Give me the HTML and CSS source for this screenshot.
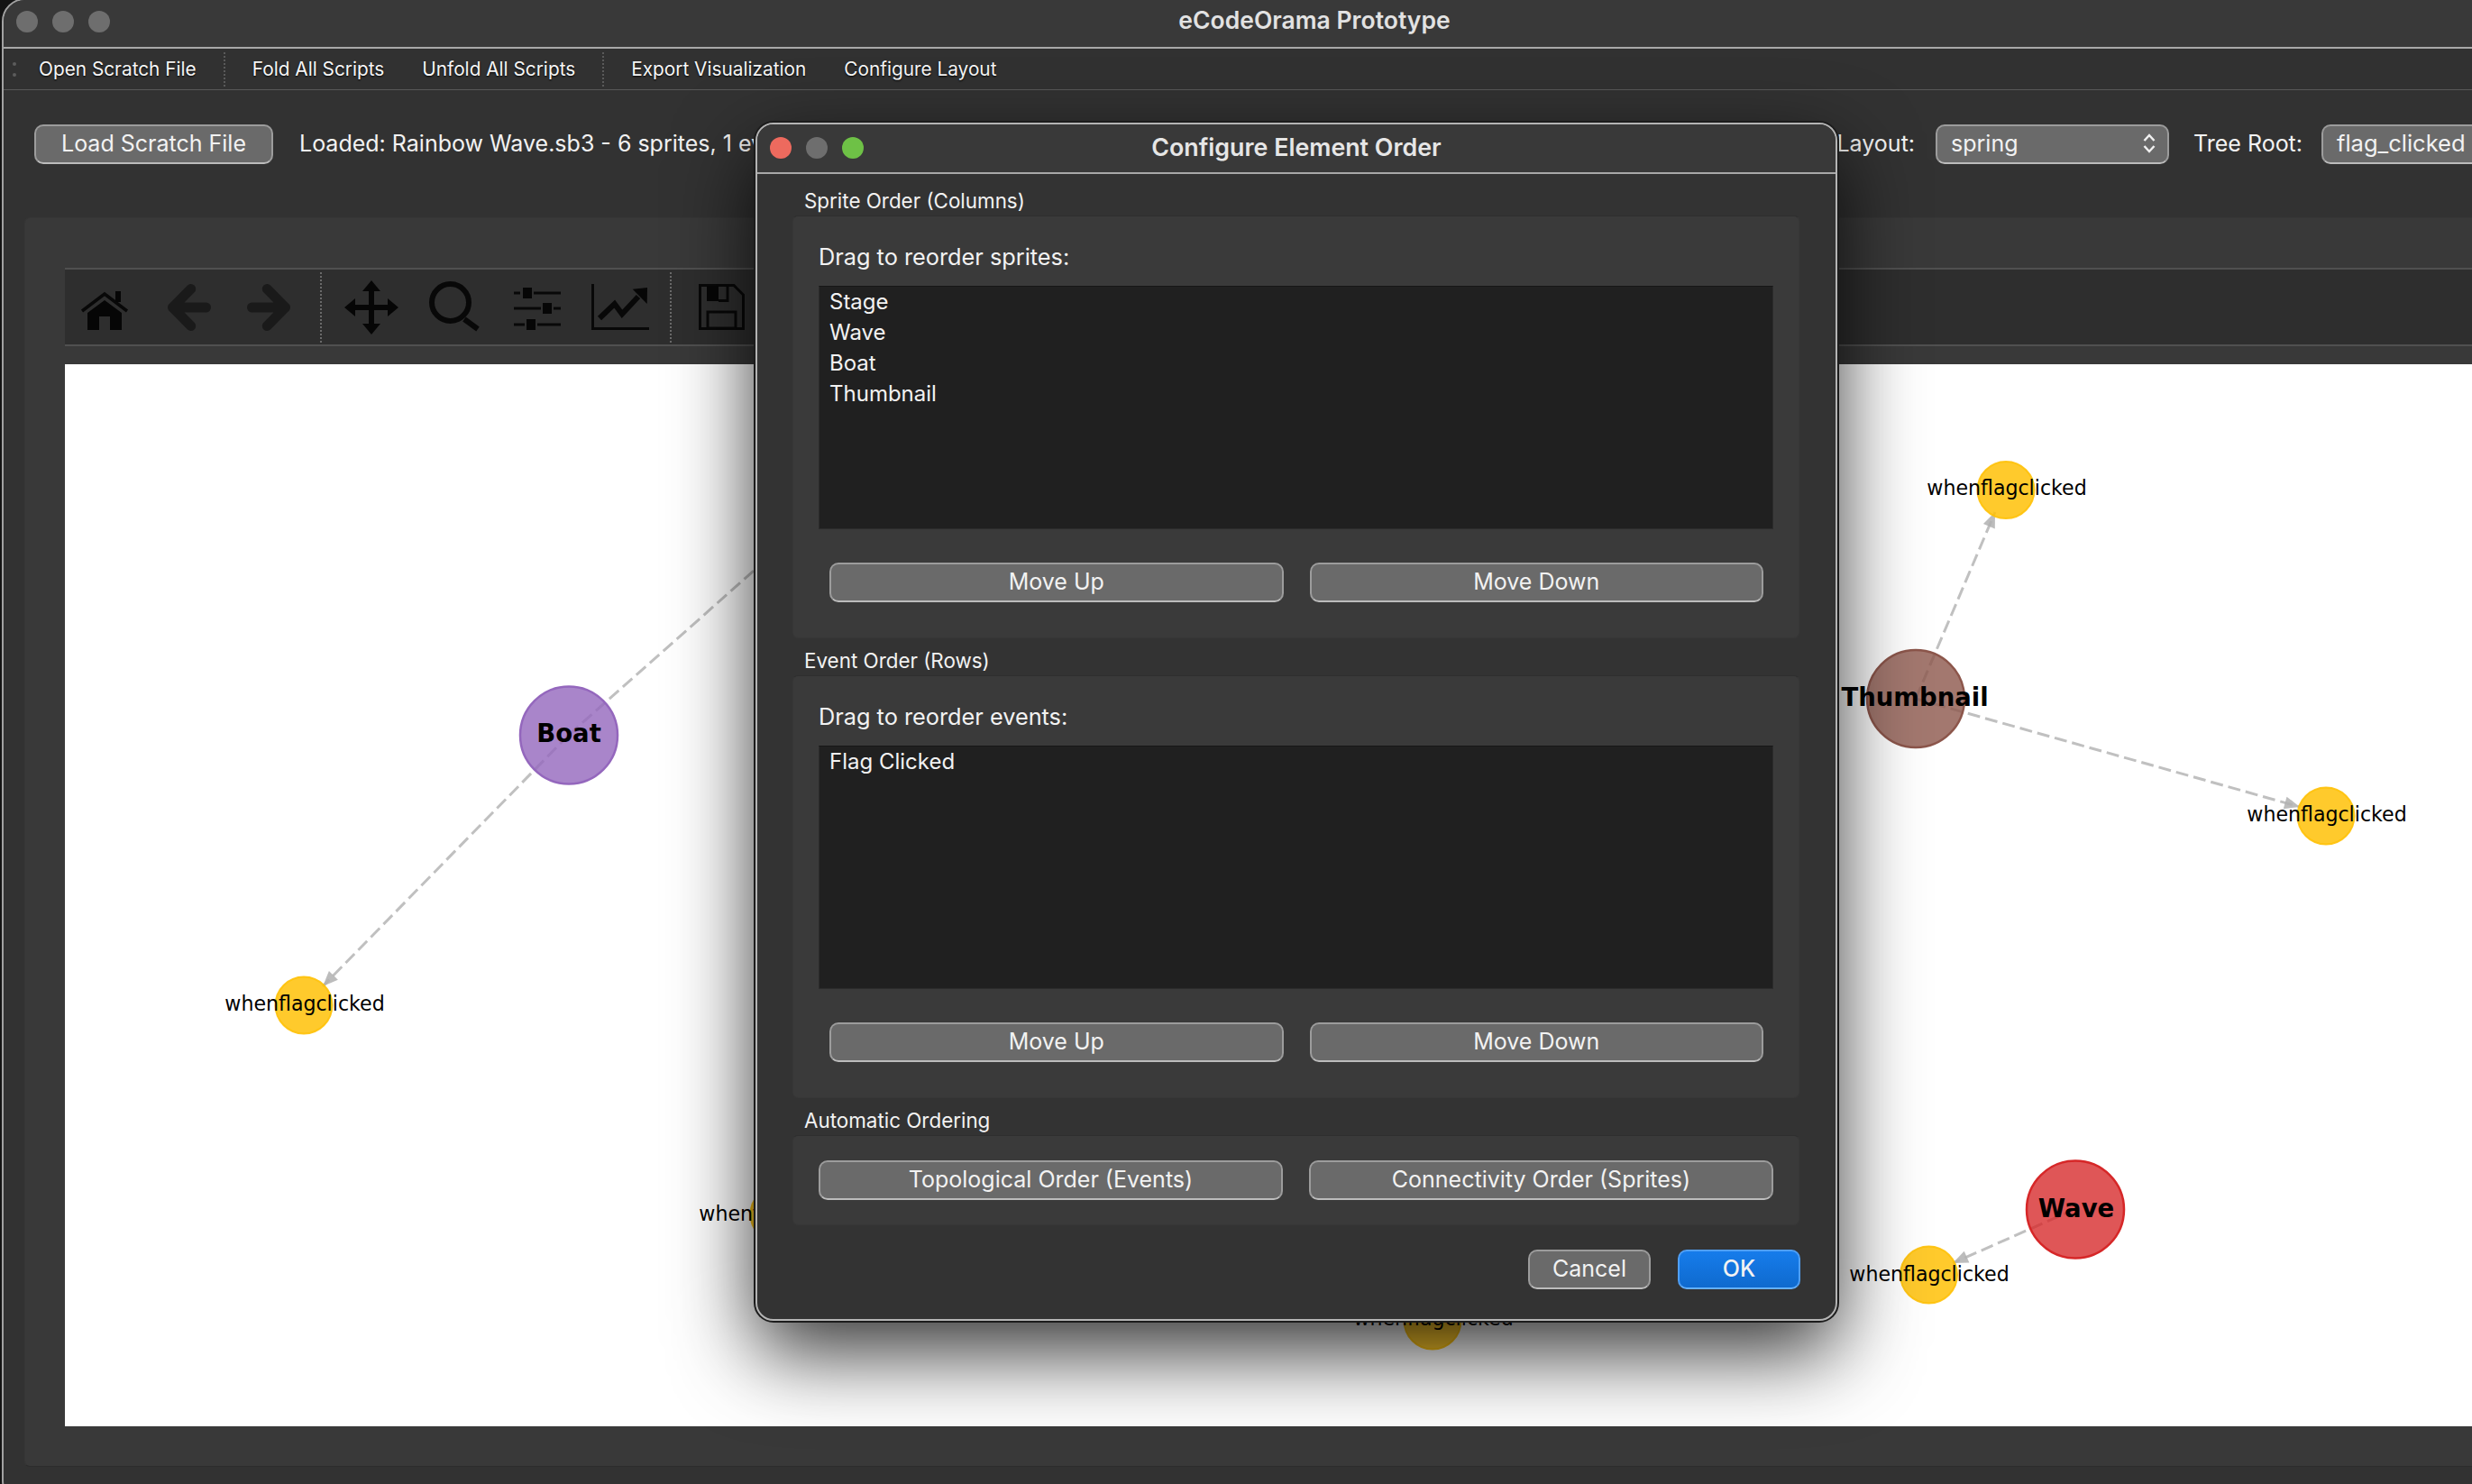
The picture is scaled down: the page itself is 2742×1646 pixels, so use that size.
FILE: index.html
```html
<!DOCTYPE html>
<html lang="en">
<head>
    <meta charset="UTF-8">
    <title>eCodeOrama Prototype</title>
    <link rel="stylesheet" href="styles.css">
</head>
<body>

    <div class="window">
        <div class="titlebar">
            <div class="lights">
                <span class="light"></span>
                <span class="light"></span>
                <span class="light"></span>
            </div>
            <div class="window-title">eCodeOrama Prototype</div>
        </div>

        <div class="menubar">
            <span class="handle"></span>
            <span class="menu-item">Open Scratch File</span>
            <span class="menu-sep"></span>
            <span class="menu-item">Fold All Scripts</span>
            <span class="menu-item">Unfold All Scripts</span>
            <span class="menu-sep"></span>
            <span class="menu-item">Export Visualization</span>
            <span class="menu-item">Configure Layout</span>
        </div>

        <div class="controls">
            <button class="btn load-btn">Load Scratch File</button>
            <div class="status">Loaded: Rainbow Wave.sb3 - 6 sprites, 1 events</div>
            <div class="ctl-label layout-label">Layout:</div>
            <div class="btn combo layout-combo">
                <span>spring</span>
                <svg class="updown" viewBox="0 0 16 24">
                    <path d="M2.5 9 L8 3 L13.5 9 M2.5 15 L8 21 L13.5 15"/>
                </svg>
            </div>
            <div class="ctl-label root-label">Tree Root:</div>
            <div class="btn combo root-combo"><span>flag_clicked</span></div>
        </div>

        <div class="panel">
            <div class="toolbar">
                <div class="tool">
                    <svg viewBox="0 0 64 64">
                        <polyline class="ic-line" points="7,36 32,17 57,36"/>
                        <rect class="ic-fill" x="44" y="14" width="6" height="12"/>
                        <path class="ic-fill" d="M32 24 L51 38 V57 H38 V42 H26 V57 H13 V38 Z"/>
                    </svg>
                </div>
                <div class="tool">
                    <svg viewBox="0 0 64 64">
                        <path class="ic-arrow" d="M52.5 32 H15.5 M35.7 11.5 L15.5 32 L35.7 52.5"/>
                    </svg>
                </div>
                <div class="tool">
                    <svg viewBox="0 0 64 64">
                        <path class="ic-arrow" d="M11.5 32 H48.5 M28.3 11.5 L48.5 32 L28.3 52.5"/>
                    </svg>
                </div>
                <div class="tool-sep"></div>
                <div class="tool">
                    <svg viewBox="0 0 64 64">
                        <path class="ic-fill" d="M29 12 H35 V29 H52 V35 H35 V52 H29 V35 H12 V29 H29 Z"/>
                        <path class="ic-fill" d="M32 2 L42 14 H22 Z M32 62 L42 50 H22 Z M2 32 L14 22 V42 Z M62 32 L50 22 V42 Z"/>
                    </svg>
                </div>
                <div class="tool">
                    <svg viewBox="0 0 64 64">
                        <circle class="ic-stroke" cx="27.5" cy="26.5" r="20.5"/>
                        <path class="ic-stroke" d="M43 45 L58 56"/>
                    </svg>
                </div>
                <div class="tool">
                    <svg viewBox="0 0 64 64">
                        <path class="ic-thin" d="M6 16 H13 M28 16 H58 M6 33 H36 M50 33 H58 M6 51 H18 M32 51 H58"/>
                        <rect class="ic-fill" x="16" y="10" width="10" height="12"/>
                        <rect class="ic-fill" x="38" y="27" width="10" height="12"/>
                        <rect class="ic-fill" x="20" y="45" width="10" height="12"/>
                    </svg>
                </div>
                <div class="tool">
                    <svg viewBox="0 0 64 64">
                        <path class="ic-thin" d="M1.5 6 V55.5 H64"/>
                        <path class="ic-stroke" d="M9 44 L25.7 28 L34 39.3 L52 20"/>
                        <polygon class="ic-fill" points="62,10 45.7,11.7 61.7,28"/>
                    </svg>
                </div>
                <div class="tool-sep"></div>
                <div class="tool">
                    <svg viewBox="0 0 64 64">
                        <path class="ic-thin" d="M8.5 7.5 H46 L56.5 18 V55.5 H8.5 Z"/>
                        <rect class="ic-fill" x="16" y="8" width="13" height="17"/>
                        <path class="ic-thin" d="M29 24.5 H39 V8"/>
                        <rect class="ic-thin" x="17" y="37" width="31" height="18"/>
                    </svg>
                </div>
            </div>

            <div class="canvas">
                <!-- viewBox uses the same numbers as the window so nodes are easy to place -->
                <svg class="graph" width="2770" height="1178" viewBox="72 404 2770 1178">
                    <defs>
                        <marker id="tip" markerUnits="userSpaceOnUse" markerWidth="20" markerHeight="16" refX="18" refY="8" orient="auto">
                            <path d="M1 1 L18 8 L1 15 Z" fill="#b0b0b0" opacity="0.85"/>
                        </marker>
                    </defs>

                    <line class="edge" x1="631" y1="815" x2="950" y2="532"/>
                    <line class="edge" x1="631" y1="815" x2="358" y2="1094" marker-end="url(#tip)"/>
                    <line class="edge" x1="2125" y1="775" x2="2213" y2="568" marker-end="url(#tip)"/>
                    <line class="edge" x1="2125" y1="775" x2="2551" y2="895" marker-end="url(#tip)"/>
                    <line class="edge" x1="2302" y1="1341" x2="2166" y2="1401" marker-end="url(#tip)"/>

                    <circle class="event" cx="337" cy="1115" r="31.5"/>
                    <circle class="event" cx="864" cy="1347" r="31.5"/>
                    <circle class="event" cx="1589" cy="1465" r="31.5"/>
                    <circle class="event" cx="2225" cy="543.5" r="31.5"/>
                    <circle class="event" cx="2580" cy="905" r="31.5"/>
                    <circle class="event" cx="2139.5" cy="1414" r="31.5"/>
                    <circle class="sprite boat" cx="631" cy="815.5" r="54"/>
                    <circle class="sprite thumb" cx="2125" cy="775" r="54"/>
                    <circle class="sprite wave" cx="2302" cy="1341.5" r="54"/>

                    <text class="ev-text" x="338" y="1113">whenflagclicked</text>
                    <text class="ev-text" x="864" y="1346">whenflagclicked</text>
                    <text class="ev-text" x="1590" y="1462">whenflagclicked</text>
                    <text class="ev-text" x="2226" y="541">whenflagclicked</text>
                    <text class="ev-text" x="2581" y="903">whenflagclicked</text>
                    <text class="ev-text" x="2140" y="1413">whenflagclicked</text>
                    <text class="sp-text" x="631" y="813">Boat</text>
                    <text class="sp-text" x="2124" y="773">Thumbnail</text>
                    <text class="sp-text" x="2303" y="1340">Wave</text>
                </svg>
            </div>
        </div>
    </div>

    <div class="dialog">
        <div class="dialog-title">
            <div class="lights">
                <span class="light red"></span>
                <span class="light"></span>
                <span class="light green"></span>
            </div>
            <div class="dialog-name">Configure Element Order</div>
        </div>

        <div class="dialog-body">
            <div class="section-label">Sprite Order (Columns)</div>
            <div class="group">
                <div class="group-hint">Drag to reorder sprites:</div>
                <ul class="order-list">
                    <li>Stage</li>
                    <li>Wave</li>
                    <li>Boat</li>
                    <li>Thumbnail</li>
                </ul>
                <div class="move-row">
                    <button class="btn">Move Up</button>
                    <button class="btn">Move Down</button>
                </div>
            </div>

            <div class="section-label">Event Order (Rows)</div>
            <div class="group">
                <div class="group-hint">Drag to reorder events:</div>
                <ul class="order-list">
                    <li>Flag Clicked</li>
                </ul>
                <div class="move-row">
                    <button class="btn">Move Up</button>
                    <button class="btn">Move Down</button>
                </div>
            </div>

            <div class="section-label">Automatic Ordering</div>
            <div class="group auto-group">
                <button class="btn">Topological Order (Events)</button>
                <button class="btn">Connectivity Order (Sprites)</button>
            </div>

            <div class="dialog-actions">
                <button class="btn action">Cancel</button>
                <button class="btn action primary">OK</button>
            </div>
        </div>
    </div>

</body>
</html>
```

FILE: styles.css
```css
html, body {
    margin: 0;
    height: 1646px;
    overflow: hidden;
    background: #141414;
}

body {
    position: relative;
    font-family: 'Inter', 'Liberation Sans', sans-serif;
    color: #f2f2f2;
}

.window {
    box-sizing: border-box;
    width: 2912px;
    height: 1670px;
    margin: -2px 0 0 2px;
    background: #323232;
    border: 2px solid #a2a2a2;
    border-radius: 26px;
    overflow: hidden;
}

/* title bar */
.titlebar {
    box-sizing: border-box;
    position: relative;
    display: flex;
    align-items: center;
    justify-content: center;
    height: 54px;
    padding-bottom: 8px;
    background: #393939;
    border-bottom: 2px solid #a8a8a8;
}

.lights {
    position: absolute;
    display: flex;
    gap: 16px;
    left: 14px;
    top: 12px;
}

.light {
    width: 24px;
    height: 24px;
    border-radius: 50%;
    background: #6e6e6e;
}

.light.red {
    background: #ed6a5e;
}

.light.green {
    background: #6ec146;
}

.window-title {
    font-size: 26.5px;
    font-weight: 600;
    color: #e2e2e2;
}

/* menu bar */
.menubar {
    display: flex;
    align-items: center;
    height: 45px;
    padding-left: 10px;
    background: #313131;
    border-bottom: 1px solid #585858;
}

.handle {
    width: 4px;
    height: 16px;
    margin-right: 4px;
    border-top: 4px dotted #5c5c5c;
    border-bottom: 4px dotted #5c5c5c;
    box-sizing: border-box;
}

.menu-item {
    padding: 0 21px;
    font-size: 20.8px;
    color: #f6f6f6;
    text-shadow: 0 1px 2px #000;
}

.menu-sep {
    height: 38px;
    margin: 0 9px;
    border-left: 2px dotted #5a5a5a;
}

/* row with the load button and the layout pickers */
.controls {
    display: flex;
    align-items: center;
    height: 44px;
    padding: 38px 35px 0 34px;
    margin-bottom: 59px;
    font-size: 25px;
}

.btn {
    box-sizing: border-box;
    height: 44px;
    margin: 0;
    padding: 0 0 3px;
    font-family: inherit;
    font-size: 25px;
    color: #f2f2f2;
    background: #6a6a6a;
    border: 2px solid #9c9c9c;
    border-bottom-color: #bcbcbc;
    border-radius: 10px;
}

.load-btn {
    width: 265px;
}

.status {
    flex: 1;
    margin-left: 29px;
    padding-bottom: 3px;
    white-space: nowrap;
}

.ctl-label {
    padding-bottom: 3px;
    white-space: nowrap;
}

.combo {
    display: flex;
    align-items: center;
    justify-content: space-between;
    padding: 0 12px 3px 15px;
}

.layout-combo {
    width: 259px;
    margin: 0 27px 0 23px;
}

.updown {
    width: 16px;
    height: 24px;
    fill: none;
    stroke: #f0f0f0;
    stroke-width: 2.5;
}

.root-combo {
    width: 302px;
    margin-left: 21px;
    font-size: 25.5px;
}

/* big group box holding the plot */
.panel {
    box-sizing: border-box;
    height: 1386px;
    margin: 0 23px;
    padding: 55px 44px 0;
    background: #393939;
    border: 1px solid #363636;
    border-bottom-color: #2c2c2c;
    border-radius: 6px;
}

.toolbar {
    box-sizing: border-box;
    display: flex;
    align-items: center;
    gap: 4px;
    height: 87px;
    background: #2e2e2e;
    border-top: 2px solid #505050;
    border-bottom: 2px solid #505050;
}

.tool {
    display: flex;
    align-items: center;
    justify-content: center;
    width: 88px;
}

.tool svg {
    width: 64px;
    height: 64px;
}

.tool-sep {
    height: 78px;
    margin: 0 7px;
    border-left: 2px dotted #6a6a6a;
}

.ic-fill {
    fill: #060606;
}

.ic-line, .ic-stroke, .ic-thin {
    fill: none;
    stroke: #080808;
}

.ic-line {
    stroke-width: 3.5;
}

.ic-stroke {
    stroke-width: 6;
}

.ic-thin {
    stroke-width: 3;
}

.ic-arrow {
    fill: none;
    stroke: #1a1a1a;
    stroke-width: 11;
    stroke-linecap: round;
    stroke-linejoin: round;
}

.canvas {
    width: 2770px;
    height: 1178px;
    margin-top: 20px;
    background: #ffffff;
}

.graph {
    display: block;
}

.edge {
    stroke: #c0c0c0;
    stroke-width: 3;
    stroke-dasharray: 14 6;
}

.event {
    fill: #ffc107;
    fill-opacity: 0.85;
    stroke: #ffc107;
    stroke-opacity: 0.9;
    stroke-width: 2;
}

.sprite {
    fill-opacity: 0.8;
    stroke-width: 2.5;
}

.boat {
    fill: #9467bd;
    stroke: #9467bd;
}

.thumb {
    fill: #8c564b;
    stroke: #8c564b;
}

.wave {
    fill: #d62728;
    stroke: #d62728;
    fill-opacity: 0.78;
}

.ev-text, .sp-text {
    font-family: 'DejaVu Sans', sans-serif;
    fill: #000;
    text-anchor: middle;
    dominant-baseline: central;
}

.ev-text {
    font-size: 22.1px;
}

.sp-text {
    font-size: 27.5px;
    font-weight: bold;
}

/* the modal dialog */
.dialog {
    position: absolute;
    box-sizing: border-box;
    left: 838px;
    top: 136px;
    width: 1200px;
    height: 1329px;
    background: #333333;
    border: 2px solid #b4b4b4;
    border-radius: 20px;
    box-shadow: 0 0 0 2px #1c1c1c, 0 35px 90px rgba(0, 0, 0, 0.8);
}

.dialog-title {
    box-sizing: border-box;
    position: relative;
    display: flex;
    align-items: center;
    justify-content: center;
    height: 55px;
    padding-bottom: 4px;
    background: #393939;
    border-bottom: 2px solid #a8a8a8;
    border-radius: 18px 18px 0 0;
}

.dialog-title .lights {
    left: 14px;
    top: 14px;
}

.dialog-name {
    font-size: 26.8px;
    font-weight: 600;
    color: #e6e6e6;
}

.dialog-body {
    padding: 5px 40px 0 39px;
}

.section-label {
    margin-top: 9px;
    padding-left: 13px;
    font-size: 22.4px;
    line-height: 32px;
}

.group {
    box-sizing: border-box;
    height: 469px;
    padding: 29px 28px 0;
    background: #3a3a3a;
    border: 1px solid #373737;
    border-top-color: #2e2e2e;
    border-radius: 6px;
}

.group-hint {
    font-size: 25.3px;
    line-height: 32px;
}

.order-list {
    box-sizing: border-box;
    height: 270px;
    margin: 16px 0 0;
    padding: 0 0 0 11px;
    list-style: none;
    background: #202020;
    border: 1px solid #2c2c2c;
    border-top-color: #161616;
}

.order-list li {
    font-size: 24px;
    line-height: 34px;
}

.move-row {
    display: flex;
    gap: 29px;
    padding: 37px 11px 0 12px;
}

.move-row .btn {
    flex: 1;
}

.auto-group {
    display: flex;
    gap: 29px;
    height: 100px;
    padding-top: 27px;
}

.auto-group .btn {
    flex: 1;
}

.dialog-actions {
    display: flex;
    justify-content: flex-end;
    gap: 30px;
    margin: 27px -1px 0 0;
}

.action {
    width: 136px;
}

.primary {
    background: linear-gradient(#167ceb, #0f6ace);
    border-color: #4f9ff5;
    border-bottom-color: #63b0ff;
    font-weight: 500;
}
```
